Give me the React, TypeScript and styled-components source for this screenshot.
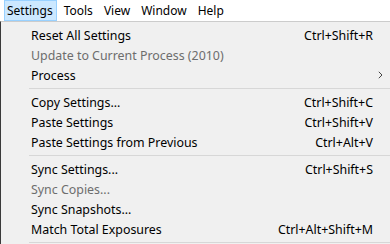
import React from "react";
import styled, { createGlobalStyle } from "styled-components";

const GlobalStyle = createGlobalStyle`
  html, body {
    margin: 0;
    padding: 0;
    background: #f0f0f0;
  }
  body {
    font-family: "Noto Sans", "Open Sans", "Liberation Sans", sans-serif;
    font-size: 12px;
    color: #000;
    width: 390px;
    height: 244px;
    overflow: hidden;
  }
`;

const MenuBar = styled.div`
  display: flex;
  align-items: stretch;
  height: 21px;
  padding-left: 4px;
  background: #fff;
`;

const BarItem = styled.div<{ $active?: boolean }>`
  display: flex;
  align-items: center;
  padding: 0 3px 0 2px;
  margin-right: 4px;
  box-sizing: border-box;
  font-size: 12px;
  line-height: 1;
  background: ${(p) => (p.$active ? "#cce8ff" : "transparent")};
  border: 1px solid ${(p) => (p.$active ? "#99d1ff" : "transparent")};
`;

const Dropdown = styled.div`
  border-top: 1px solid #cccccc;
  border-left: 1px solid #3a3a3a;
  background: #f0f0f0;
  padding-top: 3px;
`;

const Row = styled.div<{ $disabled?: boolean }>`
  display: grid;
  grid-template-columns: 1fr auto 17px;
  align-items: center;
  height: 20px;
  padding-left: 30px;
  color: ${(p) => (p.$disabled ? "#6d6d6d" : "#000")};
  white-space: nowrap;
`;

const Label = styled.span`
  font-size: 12.4px;
`;

const Shortcut = styled.span`
  font-size: 12.4px;
  text-align: right;
`;

const ArrowCell = styled.span`
  display: flex;
  align-items: center;
  padding-left: 5px;
`;

const Separator = styled.div`
  height: 7px;
  display: flex;
  align-items: center;
  padding-left: 28px;

  &::after {
    content: "";
    flex: 1;
    height: 1px;
    background: #d7d7d7;
  }
`;

type Item =
  | { sep: true }
  | { label: string; shortcut?: string; disabled?: boolean; sub?: boolean; sep?: false };

const items: Item[] = [
  { label: "Reset All Settings", shortcut: "Ctrl+Shift+R" },
  { label: "Update to Current Process (2010)", disabled: true },
  { label: "Process", sub: true },
  { sep: true },
  { label: "Copy Settings...", shortcut: "Ctrl+Shift+C" },
  { label: "Paste Settings", shortcut: "Ctrl+Shift+V" },
  { label: "Paste Settings from Previous", shortcut: "Ctrl+Alt+V" },
  { sep: true },
  { label: "Sync Settings...", shortcut: "Ctrl+Shift+S" },
  { label: "Sync Copies...", disabled: true },
  { label: "Sync Snapshots..." },
  { label: "Match Total Exposures", shortcut: "Ctrl+Alt+Shift+M" },
  { sep: true },
];

const Chevron = () => (
  <svg width="5" height="8" viewBox="0 0 5 8">
    <path d="M0.8 0.8 L4 4 L0.8 7.2" fill="none" stroke="#444" strokeWidth="1" />
  </svg>
);

export default function App() {
  return (
    <>
      <GlobalStyle />
      <MenuBar>
        <BarItem $active>Settings</BarItem>
        <BarItem>Tools</BarItem>
        <BarItem>View</BarItem>
        <BarItem>Window</BarItem>
        <BarItem>Help</BarItem>
      </MenuBar>
      <Dropdown>
        {items.map((item, i) =>
          item.sep ? (
            <Separator key={i} />
          ) : (
            <Row key={i} $disabled={item.disabled}>
              <Label>{item.label}</Label>
              <Shortcut>{item.shortcut}</Shortcut>
              <ArrowCell>{item.sub && <Chevron />}</ArrowCell>
            </Row>
          )
        )}
      </Dropdown>
    </>
  );
}
